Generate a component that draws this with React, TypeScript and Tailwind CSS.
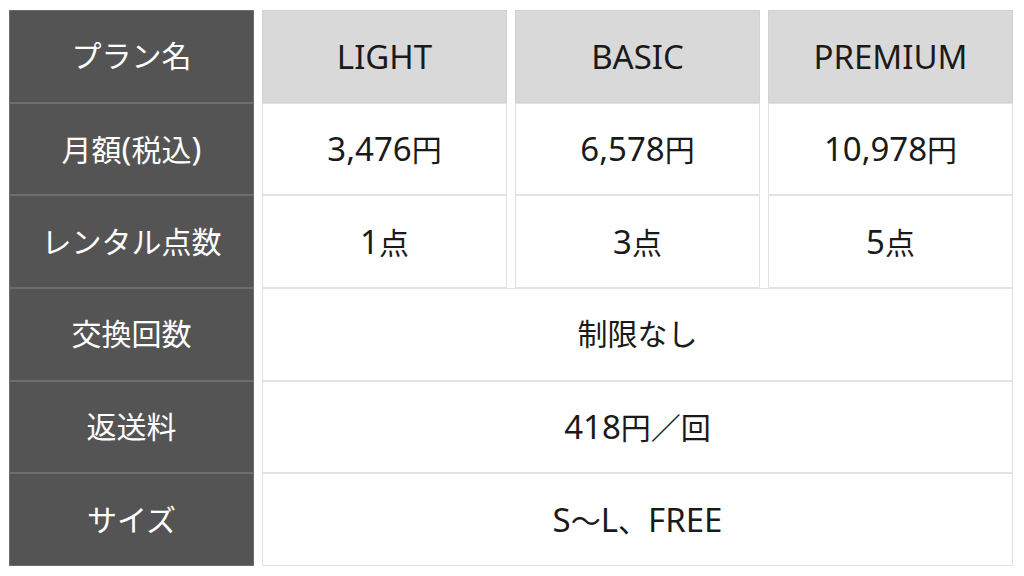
import React from "react";

const font = { fontFamily: '"Noto Sans", "Noto Sans CJK JP", sans-serif' };

function T({ text }: { text: string }) {
  const parts = text.match(/[\x20-\x7e]+|[^\x20-\x7e]+/g) || [];
  return (
    <>
      {parts.map((p, i) =>
        /^[\x20-\x7e]+$/.test(p) ? (
          <span key={i} className="text-[33px]">
            {p}
          </span>
        ) : (
          <span key={i}>{p}</span>
        )
      )}
    </>
  );
}

export default function App() {
  const head = "border border-[#6e6e6e] bg-[#545454] text-white text-center align-middle font-normal";
  const hdr = "border border-[#d2d2d2] bg-[#d9d9d9] text-[#1a1a1a] text-center align-middle font-normal";
  const cell = "border border-[#e2e2e2] bg-white text-[#1a1a1a] text-center align-middle font-normal";
  const rowH = "h-[92.67px]";
  return (
    <div className="w-[1024px] h-[576px] bg-white pt-[10px] pl-[1px]" style={font}>
      <table className="border-separate border-spacing-x-2 border-spacing-y-0 table-fixed w-[1020px] text-[30px] leading-none">
        <tbody>
          <tr className={rowH}>
            <th className={head + " w-[245px]"}><T text="プラン名" /></th>
            <th className={hdr + " w-[245px]"}><T text="LIGHT" /></th>
            <th className={hdr + " w-[245px]"}><T text="BASIC" /></th>
            <th className={hdr + " w-[245px]"}><T text="PREMIUM" /></th>
          </tr>
          <tr className={rowH}>
            <th className={head}><T text="月額(税込)" /></th>
            <td className={cell}><T text="3,476円" /></td>
            <td className={cell}><T text="6,578円" /></td>
            <td className={cell}><T text="10,978円" /></td>
          </tr>
          <tr className={rowH}>
            <th className={head}><T text="レンタル点数" /></th>
            <td className={cell}><T text="1点" /></td>
            <td className={cell}><T text="3点" /></td>
            <td className={cell}><T text="5点" /></td>
          </tr>
          <tr className={rowH}>
            <th className={head}><T text="交換回数" /></th>
            <td className={cell} colSpan={3}><T text="制限なし" /></td>
          </tr>
          <tr className={rowH}>
            <th className={head}><T text="返送料" /></th>
            <td className={cell} colSpan={3}><T text="418円／回" /></td>
          </tr>
          <tr className={rowH}>
            <th className={head}><T text="サイズ" /></th>
            <td className={cell} colSpan={3}><T text="S〜L、FREE" /></td>
          </tr>
        </tbody>
      </table>
    </div>
  );
}
